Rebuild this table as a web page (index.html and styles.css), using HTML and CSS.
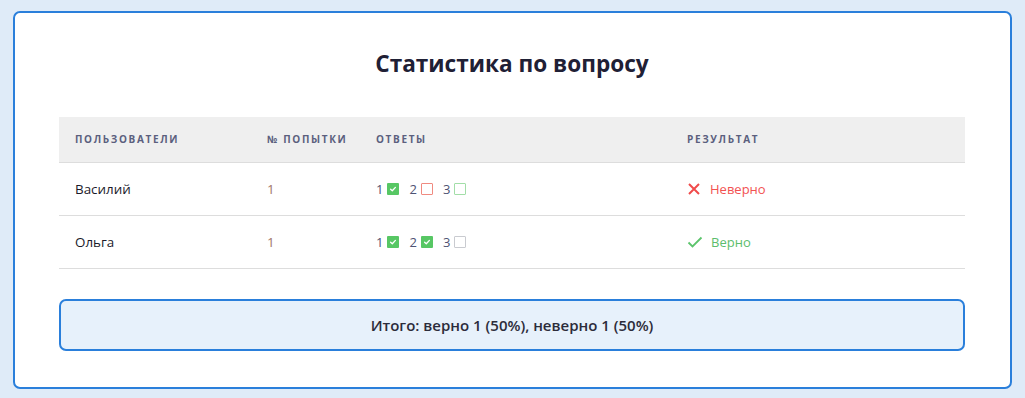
FILE: index.html
```html
<!DOCTYPE html>
<html lang="ru">
<head>
<meta charset="utf-8">
<link rel="stylesheet" href="styles.css">
</head>
<body>
<div class="card">
  <h1 class="title">Статистика по вопросу</h1>
  <table class="stats">
    <thead>
      <tr>
        <th class="c1">Пользователи</th>
        <th class="c2">№ попытки</th>
        <th class="c3">Ответы</th>
        <th class="c4">Результат</th>
      </tr>
    </thead>
    <tbody>
      <tr>
        <td class="name">Василий</td>
        <td class="attempt">1</td>
        <td>
          <div class="answers">
            <span class="ans">1<span class="box on"><svg viewBox="0 0 12 12"><path d="M3.6 6.2 L5.3 7.8 L8.4 4.4" fill="none" stroke="#fff" stroke-width="1.3" stroke-linecap="round" stroke-linejoin="round"/></svg></span></span>
            <span class="ans">2<span class="box bad"></span></span>
            <span class="ans">3<span class="box off"></span></span>
          </div>
        </td>
        <td>
          <div class="res wrong"><svg class="ico" viewBox="0 0 14 14"><path d="M2 2 L12 12 M12 2 L2 12" stroke="#f04b4b" stroke-width="2" fill="none"/></svg>Неверно</div>
        </td>
      </tr>
      <tr>
        <td class="name">Ольга</td>
        <td class="attempt">1</td>
        <td>
          <div class="answers">
            <span class="ans">1<span class="box on"><svg viewBox="0 0 12 12"><path d="M3.6 6.2 L5.3 7.8 L8.4 4.4" fill="none" stroke="#fff" stroke-width="1.3" stroke-linecap="round" stroke-linejoin="round"/></svg></span></span>
            <span class="ans">2<span class="box on"><svg viewBox="0 0 12 12"><path d="M3.6 6.2 L5.3 7.8 L8.4 4.4" fill="none" stroke="#fff" stroke-width="1.3" stroke-linecap="round" stroke-linejoin="round"/></svg></span></span>
            <span class="ans">3<span class="box empty"></span></span>
          </div>
        </td>
        <td>
          <div class="res right"><svg class="ico" viewBox="0 0 16 14"><path d="M1.5 7.5 L5.5 11.5 L14.5 2.5" stroke="#5cc46c" stroke-width="1.8" fill="none"/></svg>Верно</div>
        </td>
      </tr>
    </tbody>
  </table>
  <div class="summary">Итого: верно 1 (50%), неверно 1 (50%)</div>
</div>
</body>
</html>
```

FILE: styles.css
```css
html, body {
  margin: 0;
  padding: 0;
}
body {
  background: #dfebf8;
  font-family: "Open Sans", "Noto Sans", sans-serif;
  padding: 11px 13px 9px 13px;
  height: 398px;
  box-sizing: border-box;
}
.card {
  background: #fff;
  border: 2px solid #2a7fdb;
  border-radius: 7px;
  height: 378px;
  box-sizing: border-box;
  padding: 0 45px 0 44px;
}
.title {
  margin: 0;
  padding-top: 35px;
  height: 104px;
  box-sizing: border-box;
  text-align: center;
  font-size: 22.6px;
  font-weight: 700;
  color: #1f2035;
  line-height: 32px;
}
.stats {
  width: 100%;
  border-collapse: collapse;
  table-layout: fixed;
}
.stats th {
  background: #efefef;
  height: 45px;
  padding: 0 0 0 16px;
  text-align: left;
  font-size: 10px;
  font-weight: 700;
  letter-spacing: 1.65px;
  text-transform: uppercase;
  color: #5b5f7e;
  border-bottom: 1px solid #dddddd;
  box-sizing: border-box;
}
.stats th.c1 { width: 192px; }
.stats th.c2 { width: 109px; }
.stats th.c3 { width: 311px; }
.stats td {
  height: 53px;
  padding: 0 0 0 16px;
  border-bottom: 1px solid #dddddd;
  font-size: 13.4px;
  color: #1a1a2a;
  box-sizing: border-box;
}
.stats td.attempt {
  color: #a37668;
}
.answers {
  display: flex;
  align-items: center;
  gap: 10px;
  color: #4e5374;
  font-size: 13px;
}
.ans {
  display: flex;
  align-items: center;
  gap: 4px;
}
.box {
  width: 12px;
  height: 12px;
  box-sizing: border-box;
  border-radius: 1px;
  display: inline-block;
}
.box svg {
  display: block;
  width: 12px;
  height: 12px;
}
.box.on {
  background: #57c764;
}
.box.bad {
  border: 1px solid #f08a80;
}
.box.off, .box.empty {
  border: 1px solid #a2dea8;
}
.box.empty {
  border-color: #c9cbd0;
}
.res {
  display: flex;
  align-items: center;
  gap: 9px;
  font-size: 13px;
}
.res .ico {
  width: 14px;
  height: 14px;
  display: block;
}
.res.right .ico {
  width: 16px;
}
.res.right { gap: 8px; }
.res.wrong { color: #f25252; }
.res.right { color: #5cbd6c; }
.summary {
  margin-top: 30px;
  height: 52px;
  box-sizing: border-box;
  border: 2px solid #2a7fdb;
  border-radius: 7px;
  background: #e7f1fb;
  display: flex;
  align-items: center;
  justify-content: center;
  font-size: 15px;
  font-weight: 600;
  color: #2c2c3a;
}
```
